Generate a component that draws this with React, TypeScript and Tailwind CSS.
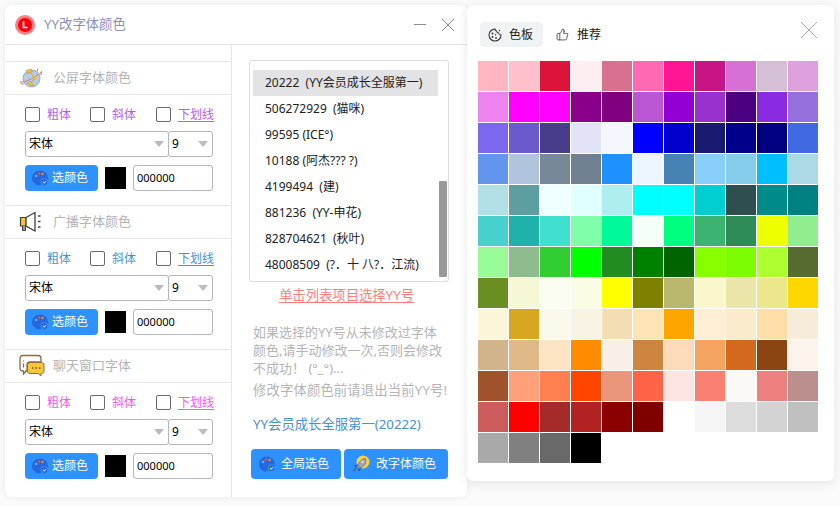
import React from "react";
import { ThumbsUp } from "lucide-react";

const colors: string[] = [
  "#FFB6C1", "#FFC0CB", "#DC143C", "#FDEEF2", "#D87090", "#FF69B4", "#FF1493", "#C71585", "#D670D6", "#D5BFD6", "#DDA0DD",
  "#EE82EE", "#FF00FF", "#FF00FF", "#8B008B", "#800080", "#BA55D3", "#9400D3", "#9932CC", "#4B0082", "#8A2BE2", "#9370DB",
  "#7B68EE", "#6A5ACD", "#483D8B", "#E3E3F7", "#F5F7FF", "#0000FF", "#0000CD", "#191970", "#00008B", "#000080", "#4169E1",
  "#6495ED", "#B0C4DE", "#778899", "#708090", "#1E90FF", "#EDF6FF", "#4682B4", "#87CEFA", "#84CEEB", "#00BFFF", "#ADD8E6",
  "#B0E0E6", "#5F9EA0", "#F0FFFF", "#E0FFFF", "#AFEEEE", "#00FFFF", "#00FFFF", "#00CED1", "#2F4F4F", "#008B8B", "#008080",
  "#48D1CC", "#20B2AA", "#40E0D0", "#7FFFAA", "#00FA9A", "#F5FFFA", "#00FF7F", "#3CB371", "#2E8B57", "#EEFF00", "#90EE90",
  "#98FB98", "#8FBC8F", "#32CD32", "#00FF00", "#228B22", "#008000", "#006400", "#88FF00", "#7CFC00", "#ADFF2F", "#556B2F",
  "#6B8E23", "#F5F7D5", "#FBFCF0", "#FAFCE3", "#FFFF00", "#808000", "#BAB76E", "#F9F7CB", "#EBE5AA", "#ECE68C", "#FFD700",
  "#FCF6D9", "#D7A722", "#FAF9EC", "#F9F3E4", "#F3DDB3", "#FCE4B5", "#FFA500", "#FCEFD5", "#FBEBCD", "#FDDEA9", "#F7ECD9",
  "#D2B48C", "#DEB887", "#FCE4C4", "#FF8C00", "#F8F0E6", "#CD853F", "#FDDAB9", "#F4A460", "#D2691E", "#8B4513", "#FCF4EC",
  "#A0522D", "#FFA07A", "#FF7F50", "#FF4500", "#E9967A", "#FF6347", "#FCE4E1", "#FA8072", "#FBF9F6", "#EE8080", "#BC8F8F",
  "#CD5C5C", "#FF0000", "#A52A2A", "#B22222", "#8B0000", "#800000", "#FFFFFF", "#F5F5F5", "#DCDCDC", "#D3D3D3", "#C0C0C0",
  "#A9A9A9", "#808080", "#696969", "#000000",
];

const accounts: string[] = [
  "20222  (YY会员成长全服第一)",
  "506272929  (猫咪)",
  "99595 (ICE°)",
  "10188 (阿杰??? ?)",
  "4199494  (建)",
  "881236  (YY-申花)",
  "828704621  (秋叶)",
  "48008509  (?．十 八?．江流)",
];

const PaletteIcon = () => (
  <svg width="18" height="18" viewBox="0 0 18 18">
    <path d="M9 1.500C4.600 1.500 1 4.800 1 9s3.200 7.500 7.500 7.500c1.600 0 1.800-1.200 1.300-2.200-.5-1 .2-2 1.300-2h2.400c2 0 3.500-1.300 3.500-3.400C16.500 4.500 13.300 1.500 9 1.500z" fill="#2568dd" />
    <circle cx="5" cy="7" r="1.300" fill="#5fb0f5" />
    <circle cx="8" cy="4.500" r="1.200" fill="#e8503a" />
    <circle cx="11.500" cy="5" r="1.200" fill="#f09020" />
    <circle cx="13.500" cy="13" r="3.500" fill="#2568dd" stroke="#2d92ff" />
    <path d="M12 13l1.200 1.200 1.800-2" fill="none" stroke="#fff" strokeWidth="1" />
  </svg>
);

const RocketIcon = () => (
  <svg width="18" height="18" viewBox="0 0 18 18">
    <circle cx="11" cy="7" r="6.500" fill="#f7d23e" />
    <path d="M13.500 3.500c-3.500.3-6.500 3-7.500 6.500l2.500 2.500c3.500-1 6.200-4 5-9z" fill="#a9a4b8" stroke="#6b6478" strokeWidth=".7" />
    <circle cx="10.500" cy="6.800" r="1.200" fill="#ddd" />
    <path d="M6 10l-3 1 1.500 1.500M8.500 12.500l-1 3-1.500-1.500M4 13.500l-2.500 2.500" fill="none" stroke="#54506a" strokeWidth="1.100" />
  </svg>
);

const GlobeIcon = () => (
  <svg width="25" height="24" viewBox="0 0 25 24">
    <circle cx="12.500" cy="12.500" r="8.500" fill="#b4cde2" stroke="#8d9aaa" strokeWidth=".8" />
    <path d="M1.500 16c5 .5 16-5 21-10.500" fill="none" stroke="#c08a80" strokeWidth="1" />
    <path d="M2 15.500c-1.500 1.500 1 3 3 2.500M22.500 5.500c1 2-1 3.500-2 4M19 2.500l-1 3" fill="none" stroke="#b07060" strokeWidth=".9" />
    <circle cx="15.500" cy="11.500" r="2.100" fill="#f3b72c" />
    <path d="M7 4.500l5-1.500 1.500 2.500-5 2zM8 17l4 3 3-.5-3.500-4z" fill="#efc040" stroke="#a98f50" strokeWidth=".5" />
    <path d="M11 6l4 5M15 13l-3 4" stroke="#d6a030" strokeWidth=".9" />
  </svg>
);

const HornIcon = () => (
  <svg width="24" height="24" viewBox="0 0 24 24">
    <path d="M1.500 7.500h5.500v8.500H1.500z" fill="#f5c92e" stroke="#3f3f3f" strokeWidth="1.200" />
    <path d="M7 7.500l9-5v18.500l-9-5z" fill="#fff" stroke="#3f3f3f" strokeWidth="1.300" />
    <path d="M3.500 16v4.500h3V16" fill="#9a9a9a" stroke="#3f3f3f" strokeWidth="1" />
    <path d="M19 6h2.500M19 11.500h2.500M19 17h2.500" stroke="#4a4a4a" strokeWidth="1.400" />
  </svg>
);

const ChatIcon = () => (
  <svg width="26" height="24" viewBox="0 0 26 24">
    <path d="M4 1.500h15c2 0 3 1 3 3V8H11c-2 0-3 1-3 3v6H7l-2.500 3v-3H4c-2 0-3-1-3-3V4.500c0-2 1-3 3-3z" fill="#fff" stroke="#8d6a45" strokeWidth="1.300" />
    <path d="M4.500 6.500v1M4.500 9.500v4" stroke="#8d6a45" strokeWidth="1.300" />
    <path d="M11 8.500h11.500c1.500 0 2.500 1 2.500 2.500v6c0 1.500-1 2.500-2.500 2.500h-.5v2.500l-3-2.500h-8c-1.500 0-2.500-1-2.500-2.500v-6c0-1.500 1-2.500 2.500-2.500z" fill="#f7c736" stroke="#8d6a45" strokeWidth="1" />
    <path d="M13 14h1.500M16.500 14H18M20 14h1.500" stroke="#6b4f2e" strokeWidth="1.500" />
  </svg>
);

// bitten cookie used on the 色板 tab
const SwatchTabIcon = () => (
  <svg width="14" height="14" viewBox="0 0 14 14" fill="none">
    <path d="M7 1A6 6 0 1 0 13 7 2.500 2.500 0 0 1 10.500 5 2.500 2.500 0 0 1 8.500 3 2 2 0 0 1 7 1z" stroke="#333" strokeWidth="1.100" />
    <circle cx="4.500" cy="5.500" r=".9" fill="#333" />
    <circle cx="4.500" cy="9" r=".9" fill="#333" />
    <circle cx="8" cy="10" r=".9" fill="#333" />
    <circle cx="7.500" cy="6.800" r=".7" fill="#333" />
    <circle cx="11.500" cy="2.500" r=".7" fill="#333" />
  </svg>
);

const BlueButton = ({ icon, label, className }: { icon: React.ReactNode; label: string; className: string }) => (
  <div className={`flex items-center rounded-[4px] bg-[#2d92ff] text-white ${className}`}>
    {icon}
    <span>{label}</span>
  </div>
);

const Dropdown = ({ value, className }: { value: string; className: string }) => (
  <div className={`flex h-[26px] items-center justify-between rounded-[3px] border border-[#b5b5bd] pl-[3px] pr-[4px] text-[12px] text-black ${className}`}>
    <span>{value}</span>
    <span className="h-0 w-0 border-x-[5.5px] border-t-[6px] border-x-transparent border-t-[#bbbbbb]" />
  </div>
);

const FontSection = ({
  title,
  icon,
  labelClass,
}: {
  title: string;
  icon: React.ReactNode;
  labelClass: string;
}) => (
  <section className="h-[144px] border-t border-[#e6e6e6]">
    <div className="flex h-[33px] items-center border-b border-[#e6e6e6] pl-[14px]">
      <span className="flex w-[34px] items-center">{icon}</span>
      <span className="text-[13px] text-[#b4b4b4]">{title}</span>
    </div>
    <div className="pl-[20px] pt-[12px]">
      <div className={`flex h-[15px] items-center text-[12px] ${labelClass}`}>
        <label className="flex w-[65px] items-center gap-[7px]">
          <span className="h-[15px] w-[15px] rounded-[2px] border border-[#6b6b6b]" />
          粗体
        </label>
        <label className="flex w-[66px] items-center gap-[7px]">
          <span className="h-[15px] w-[15px] rounded-[2px] border border-[#6b6b6b]" />
          斜体
        </label>
        <label className="flex items-center gap-[7px]">
          <span className="h-[15px] w-[15px] rounded-[2px] border border-[#6b6b6b]" />
          <span className="underline underline-offset-2">下划线</span>
        </label>
      </div>
      <div className="mt-[9px] flex">
        <Dropdown value="宋体" className="w-[144px]" />
        <Dropdown value="9" className="-ml-px w-[45px]" />
      </div>
      <div className="mt-[8px] flex items-center">
        <BlueButton
          icon={<span className="ml-[6px] mr-[3px] flex"><PaletteIcon /></span>}
          label="选颜色"
          className="h-[26px] w-[73px] text-[12px]"
        />
        <span className="ml-[7px] h-[22px] w-[21px] bg-black" />
        <div className="ml-[7px] flex h-[26px] w-[80px] items-center rounded-[3px] border border-[#b5b5bd] pl-[3px] text-[11px] text-black">
          000000
        </div>
      </div>
    </div>
  </section>
);

export default function App() {
  return (
    <div className="flex h-[506px] w-[840px] items-start overflow-hidden bg-[#fbfbfb] pl-[5px] pt-[5px] font-['Noto_Sans','Noto_Sans_CJK_SC',sans-serif]">
      {/* Main window */}
      <div className="h-[492px] w-[462px] rounded-[6px] bg-white shadow-[0_0_8px_rgba(0,0,0,0.08)]">
        <header className="flex h-[40px] items-center border-b border-[#e6e6e6] pl-[10px] pr-[13px]">
          <svg width="20" height="20" viewBox="0 0 20 20">
            <circle cx="10" cy="10" r="10" fill="#ff8080" />
            <circle cx="10" cy="10" r="7" fill="#f8000c" />
            <path d="M8.500 6.500v6h4" fill="none" stroke="#fff" strokeWidth="1.700" />
          </svg>
          <h1 className="ml-[9px] text-[13.33px] font-normal text-[#8d90b8]">YY改字体颜色</h1>
          <div className="ml-auto flex items-center gap-[16px]">
            <span className="h-px w-[12px] bg-[#8a8a8a]" />
            <svg width="12" height="12" viewBox="0 0 12 12">
              <path d="M0 0l12 12M12 0L0 12" stroke="#8a8a8a" strokeWidth="1" />
            </svg>
          </div>
        </header>

        <div className="flex h-[452px]">
          {/* Font settings */}
          <div className="w-[227px] border-r border-[#e6e6e6] pt-[16px]">
            <FontSection title="公屏字体颜色" icon={<GlobeIcon />} labelClass="text-[#b65cf2]" />
            <FontSection title="广播字体颜色" icon={<HornIcon />} labelClass="text-[#4a8fd6]" />
            <FontSection title="聊天窗口字体" icon={<ChatIcon />} labelClass="text-[#fb55f0]" />
          </div>

          {/* Account list */}
          <div className="flex-1 pt-[15px]">
            <div className="ml-[17px] flex h-[222px] w-[200px] rounded-[3px] border border-[#dcdce2] pl-[3px] pt-[9px]">
              <ul className="w-[185px] text-[12px] text-[#222222]">
                {accounts.map((account, i) => (
                  <li
                    key={account}
                    className={`flex h-[26px] items-center whitespace-pre pl-[12px] ${i === 0 ? "bg-[#e3e3e6]" : ""}`}
                  >
                    {account}
                  </li>
                ))}
              </ul>
              <div className="ml-px mt-[111px] h-[96px] w-[8px] rounded-[1px] bg-[#999999]" />
            </div>
            <p className="ml-[47px] mt-[2px] text-[13.33px] leading-[22px] text-[#ff7f7f] underline underline-offset-2">
              单击列表项目选择YY号
            </p>
            <p className="ml-[21px] mt-[17px] whitespace-pre text-[13px] leading-[18px] text-[#b4b4b4]">
              如果选择的YY号从未修改过字体
              <br />
              颜色,请手动修改一次,否则会修改
              <br />
              不成功！ (°_°)...
            </p>
            <p className="ml-[21px] mt-[4px] whitespace-nowrap text-[13.33px] leading-[18px] tracking-[0.15px] text-[#b4b4b4]">
              修改字体颜色前请退出当前YY号!
            </p>
            <p className="ml-[21px] mt-[16px] text-[13.33px] leading-[18px] text-[#4a8fd6]">
              YY会员成长全服第一(20222)
            </p>
            <div className="ml-[19px] mt-[16px] flex gap-[3px]">
              <BlueButton
                icon={<span className="ml-[7px] mr-[5px] flex"><PaletteIcon /></span>}
                label="全局选色"
                className="h-[30px] w-[90px] text-[12px]"
              />
              <BlueButton
                icon={<span className="ml-[8px] mr-[6px] flex"><RocketIcon /></span>}
                label="改字体颜色"
                className="h-[30px] w-[104px] text-[12px]"
              />
            </div>
          </div>
        </div>
      </div>

      {/* Colour panel */}
      <div className="relative h-[476px] w-[367px] rounded-[6px] bg-white shadow-[0_2px_12px_rgba(0,0,0,0.1)]">
        <div className="flex items-center pl-[13px] pr-[17px] pt-[17px] text-[12px] text-[#222222]">
          <div className="flex h-[25px] w-[63px] items-center rounded-[4px] bg-[#f0f3f3] pl-[8px]">
            <SwatchTabIcon />
            <span className="ml-[7px]">色板</span>
          </div>
          <div className="ml-[13px] flex items-center">
            <ThumbsUp size={13} strokeWidth={1.300} />
            <span className="ml-[8px]">推荐</span>
          </div>
          <svg className="ml-auto -mt-[10px]" width="16" height="16" viewBox="0 0 16 16">
            <path d="M0 0l16 16M16 0L0 16" stroke="#a8a8a8" strokeWidth="1" />
          </svg>
        </div>
        <div className="ml-[11px] mt-[14px] grid w-[340px] grid-cols-[repeat(11,30px)] auto-rows-[30px] gap-px">
          {colors.map((color, i) => (
            <div key={i} style={{ backgroundColor: color }} />
          ))}
        </div>
      </div>
    </div>
  );
}
